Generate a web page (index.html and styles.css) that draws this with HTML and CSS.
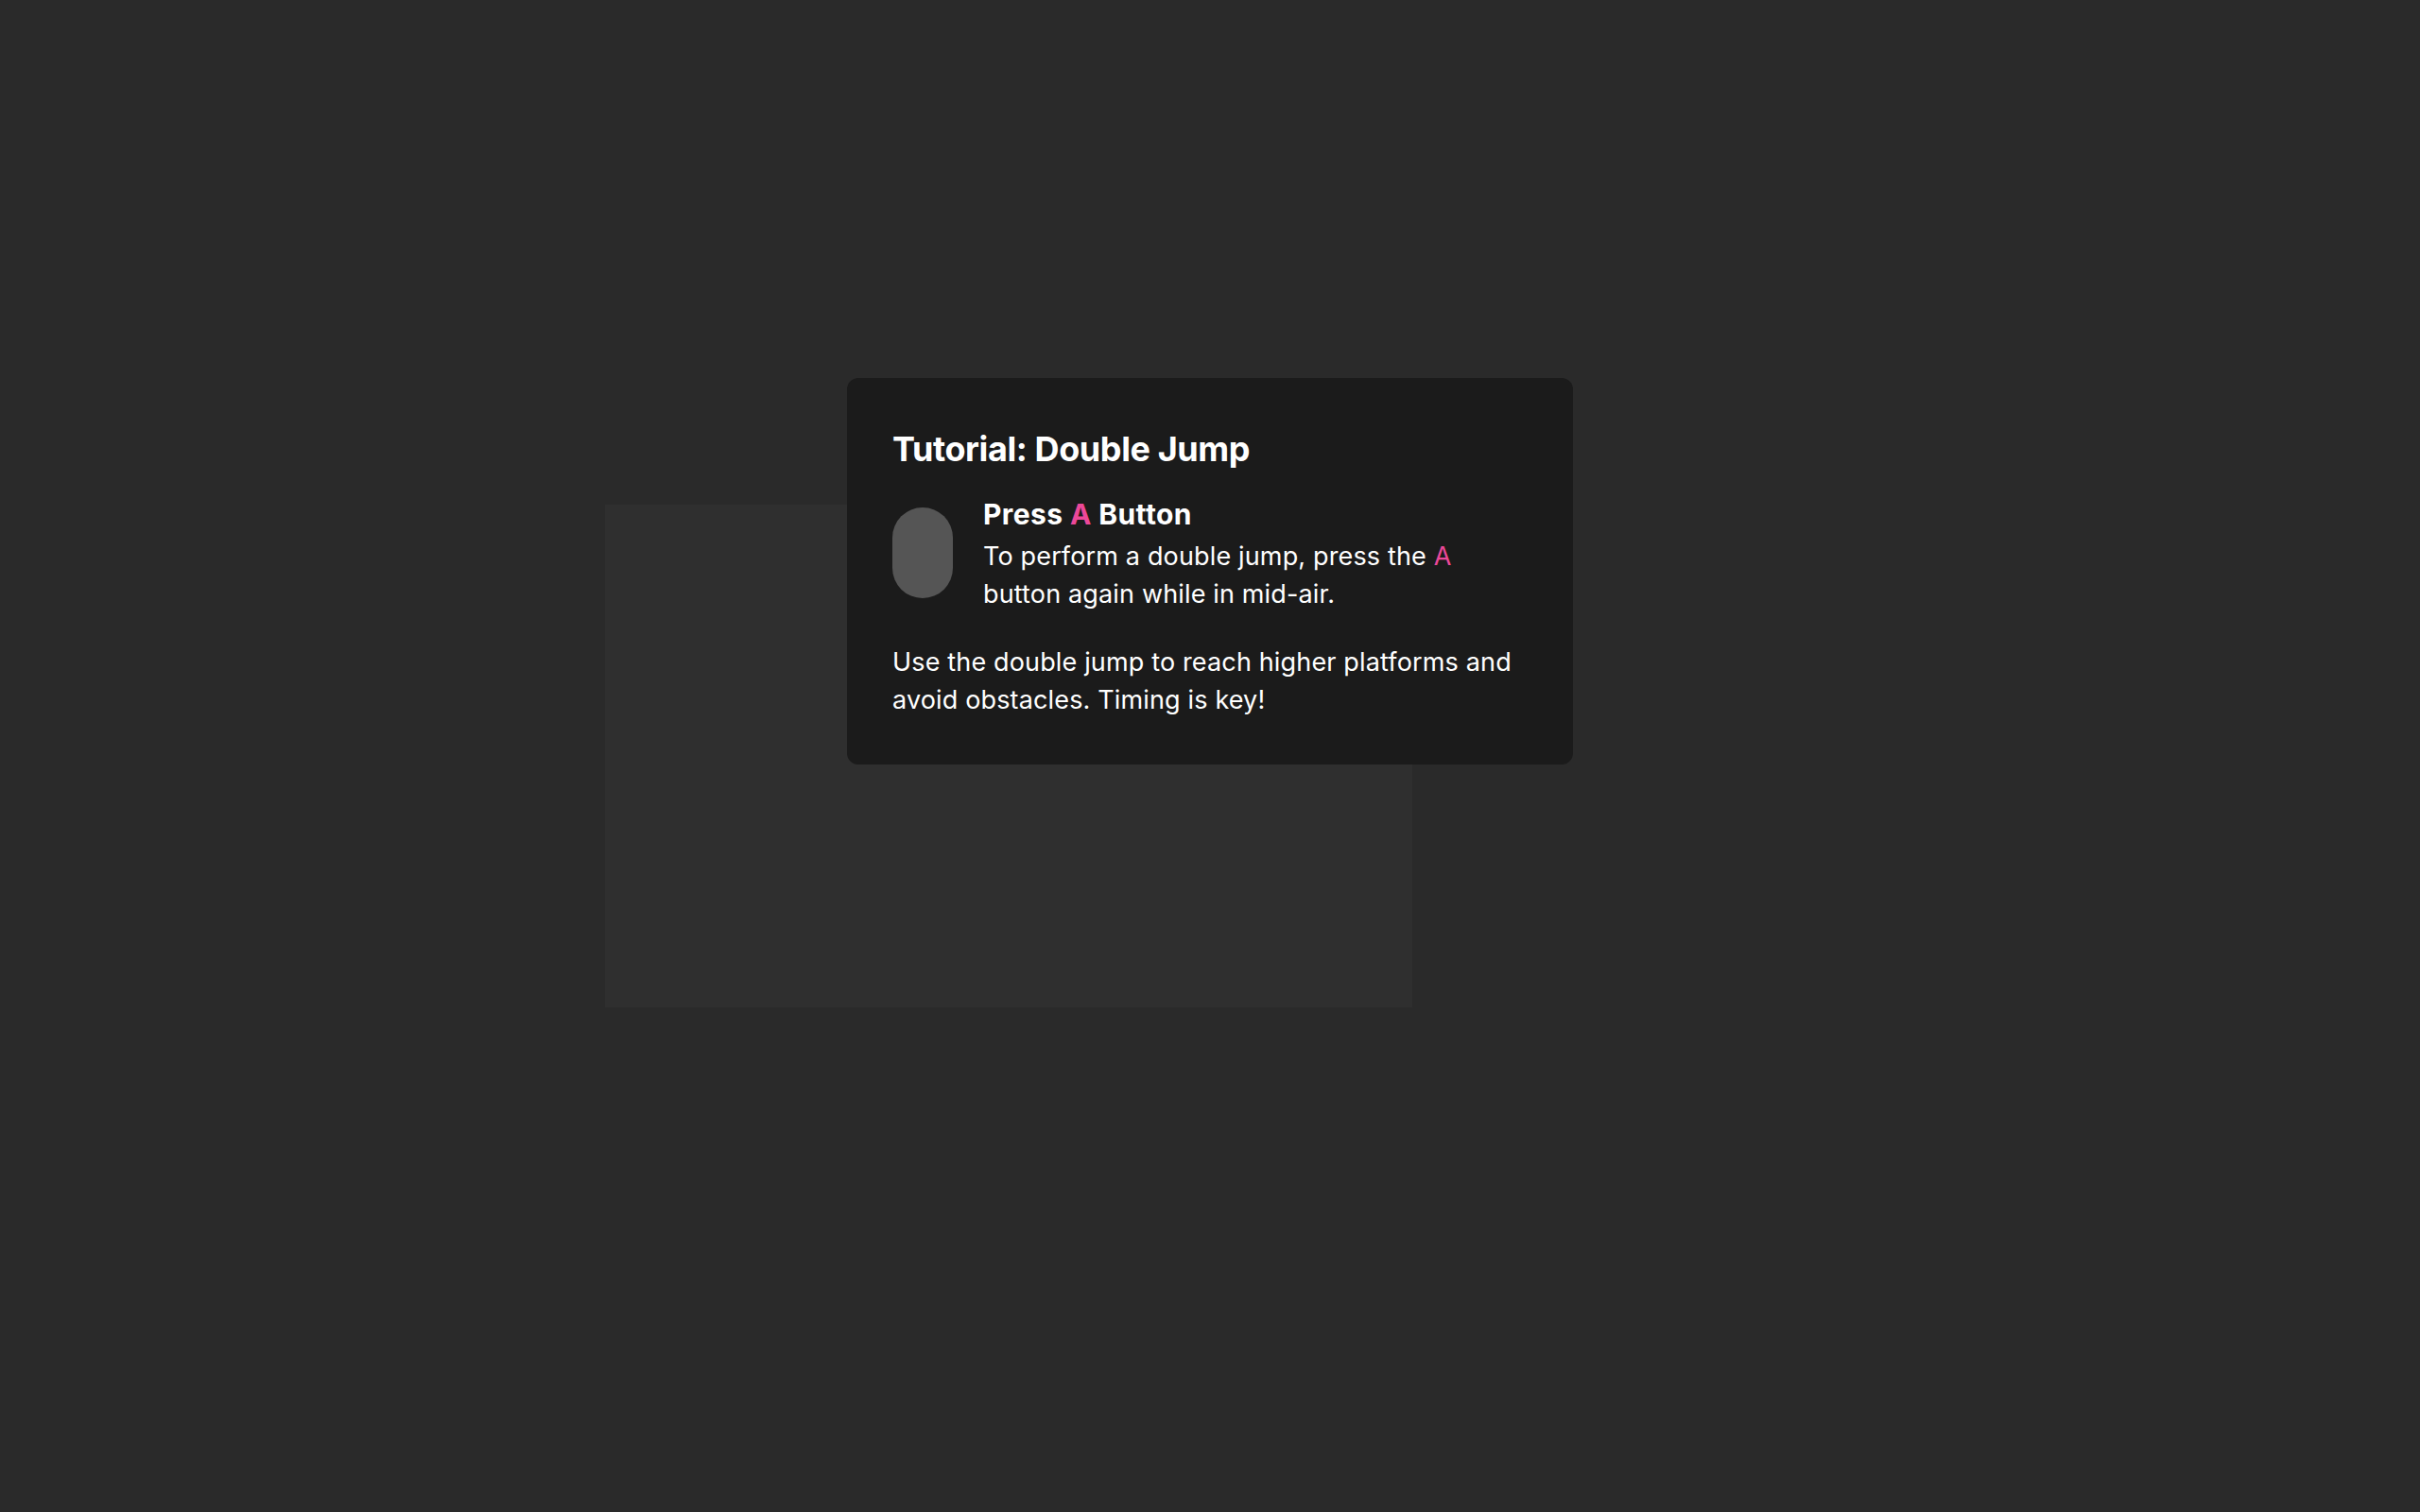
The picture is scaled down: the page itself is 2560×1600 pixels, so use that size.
FILE: index.html
```html
<!DOCTYPE html>
<html lang="en">
<head>
<meta charset="utf-8">
<title>Tutorial: Double Jump</title>
<link rel="stylesheet" href="styles.css">
</head>
<body>
<div class="stage">
  <div class="game-area"></div>
  <div class="tutorial-card">
    <h2 class="tutorial-title">Tutorial: Double Jump</h2>
    <div class="step">
      <div class="button-icon"></div>
      <div class="step-text">
        <h3 class="step-title">Press <span class="accent">A</span> Button</h3>
        <p class="step-desc">To perform a double jump, press the <span class="accent">A</span> button again while in mid-air.</p>
      </div>
    </div>
    <p class="tip">Use the double jump to reach higher platforms and avoid obstacles. Timing is key!</p>
  </div>
</div>
</body>
</html>
```
FILE: styles.css
```css
html, body {
  margin: 0;
  padding: 0;
  height: 100%;
}
body {
  background: #2a2a2a;
  color: #ffffff;
  font-family: Inter, "Noto Sans", "Liberation Sans", sans-serif;
  overflow: hidden;
}
.stage {
  position: relative;
  width: 2560px;
  height: 1600px;
}
.game-area {
  position: absolute;
  left: 640px;
  top: 534px;
  width: 854px;
  height: 532px;
  background: #2f2f2f;
}
.tutorial-card {
  position: absolute;
  top: 400px;
  left: 896px;
  width: 768px;
  box-sizing: border-box;
  padding: 48px;
  background: #1b1b1b;
  border-radius: 12px;
}
.tutorial-title {
  margin: 3px 0 21px;
  font-size: 36px;
  line-height: 48px;
  font-weight: 700;
  letter-spacing: -0.4px;
}
.step {
  display: flex;
  align-items: center;
  gap: 32px;
}
.button-icon {
  flex: none;
  width: 64px;
  height: 96px;
  border-radius: 32px;
  background: #555555;
}
.step-text {
  display: flex;
  flex-direction: column;
}
.step-title {
  margin: 2px 0 2px;
  font-size: 30px;
  line-height: 45px;
  font-weight: 700;
  letter-spacing: 0.4px;
}
.step-desc {
  margin: 0;
  font-size: 27px;
  line-height: 40px;
  letter-spacing: 0.15px;
}
.tip {
  margin: 32px 0 0;
  font-size: 27px;
  line-height: 40px;
  letter-spacing: 0.15px;
}
.accent {
  color: #ec4899;
}
```
